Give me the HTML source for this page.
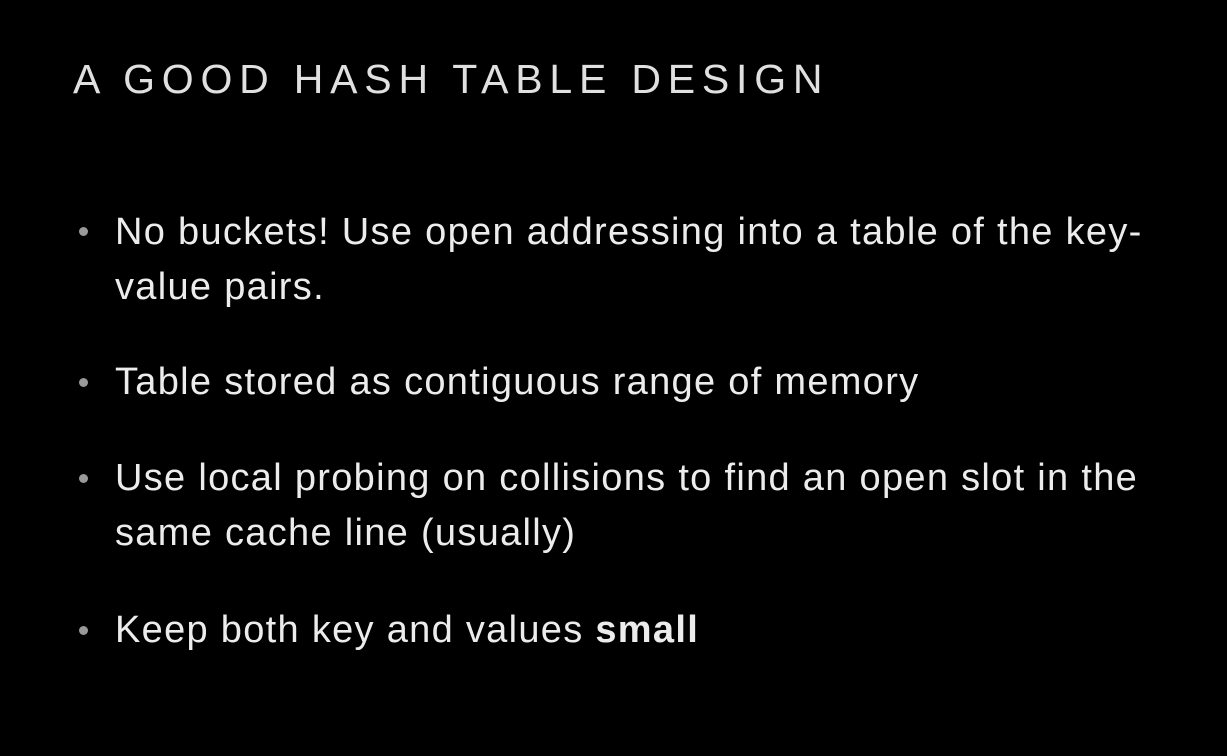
<!DOCTYPE html>
<html><head><style>
html,body{margin:0;padding:0;background:#000;}
body{width:1227px;height:756px;position:relative;overflow:hidden;font-family:"Liberation Sans",sans-serif;color:#e8e8e8;}
h1{position:absolute;left:73px;top:56px;margin:0;font-weight:normal;font-size:41px;letter-spacing:6.8px;color:#e0e0e0;}
.b{position:absolute;left:115px;font-size:38px;letter-spacing:1.3px;line-height:55px;color:#ececec;white-space:nowrap;}
.d{position:absolute;left:79px;width:9px;height:9px;border-radius:50%;background:#999;}
</style></head><body>
<h1>A GOOD HASH TABLE DESIGN</h1>
<div class="d" style="top:227px"></div>
<div class="b" style="top:205px">No buckets! Use open addressing into a table of the key-<br>value pairs.</div>
<div class="d" style="top:378px"></div>
<div class="b" style="top:355px">Table stored as contiguous range of memory</div>
<div class="d" style="top:474px"></div>
<div class="b" style="top:451px">Use local probing on collisions to find an open slot in the<br>same cache line (usually)</div>
<div class="d" style="top:626px"></div>
<div class="b" style="top:603px">Keep both key and values <b>small</b></div>
</body></html>
